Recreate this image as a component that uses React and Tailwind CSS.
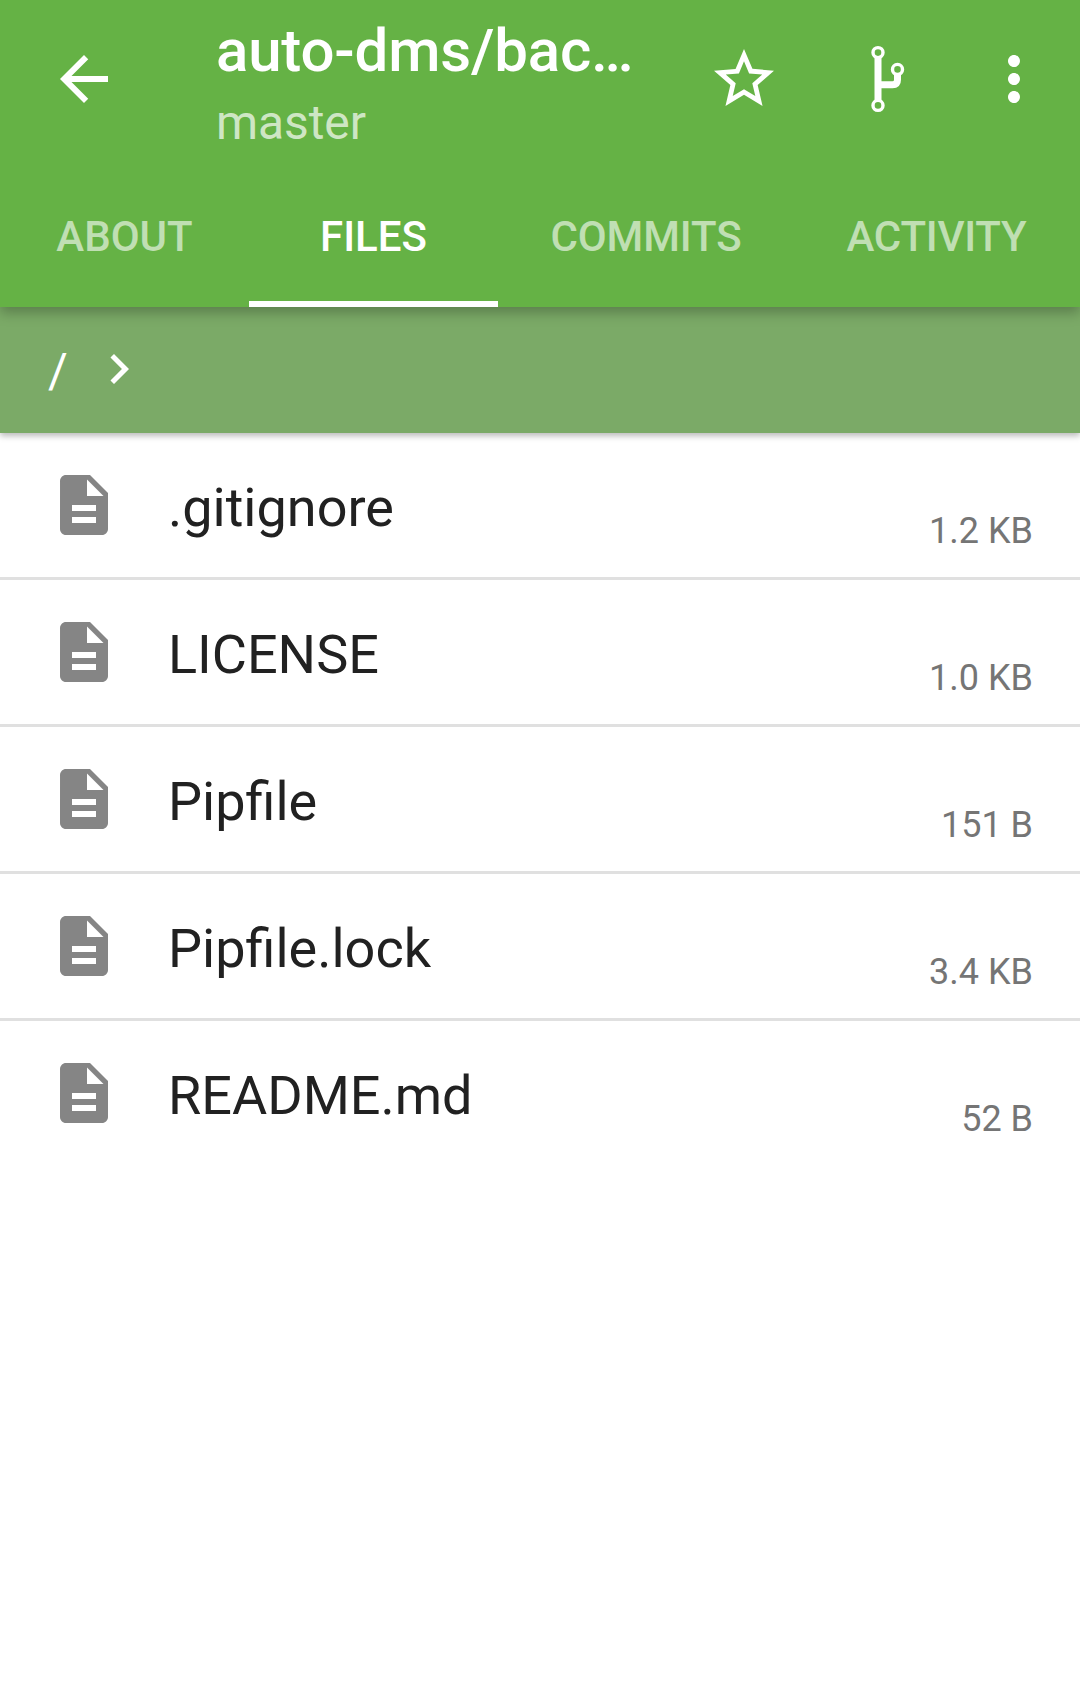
const files = [
  { name: '.gitignore', size: '1.2 KB' },
  { name: 'LICENSE', size: '1.0 KB' },
  { name: 'Pipfile', size: '151 B' },
  { name: 'Pipfile.lock', size: '3.4 KB' },
  { name: 'README.md', size: '52 B' },
];

const tabs = [
  { label: 'ABOUT', width: 'w-[249px]' },
  { label: 'FILES', width: 'w-[249px]', active: true },
  { label: 'COMMITS', width: 'w-[296px]', tracking: 'tracking-[-0.1px]' },
  { label: 'ACTIVITY', width: 'w-[285px]', tracking: 'tracking-[-0.25px]' },
];

function Icon({ d, className }) {
  return (
    <svg viewBox="0 0 24 24" fill="currentColor" className={className}>
      <path d={d} />
    </svg>
  );
}

function ForkIcon() {
  return (
    <svg viewBox="0 0 72 72" fill="none" stroke="white" className="size-[72px]">
      <path d="M26 14V58M26 41.8H40.5Q45.5 41.8 45.5 36.8V31" strokeWidth="7" />
      <g strokeWidth="3.4" fill="#65b245">
        <circle cx="26" cy="9.6" r="5" />
        <circle cx="45.5" cy="26.4" r="5" />
        <circle cx="26" cy="62.4" r="5" />
      </g>
    </svg>
  );
}

function Toolbar() {
  return (
    <div className="flex h-[163px] pl-12 pr-[30px]">
      <button className="mt-[43px] size-[72px] shrink-0">
        <Icon className="size-[72px]" d="M20 11H7.83l5.59-5.59L12 4l-8 8 8 8 1.41-1.41L7.83 13H20v-2z" />
      </button>
      <div className="ml-24 mt-[15px] w-[420px] shrink-0">
        <div className="whitespace-nowrap text-[60px] font-medium leading-[71px] tracking-[-0.18px]">auto-dms/bac…</div>
        <div className="mt-[9px] text-[48px] leading-[56px] tracking-[-0.1px] text-white/70">master</div>
      </div>
      <div className="ml-auto mt-[43px] flex h-[72px]">
        <Icon className="mr-[72px] size-[72px]" d="M22 9.24l-7.19-.62L12 2 9.19 8.63 2 9.24l5.46 4.73L5.82 21 12 17.27 18.18 21l-1.63-7.03L22 9.24zM12 15.4l-3.76 2.27 1-4.28-3.32-2.88 4.38-.38L12 6.1l1.71 4.04 4.38.38-3.32 2.88 1 4.28L12 15.4z" />
        <ForkIcon />
        <Icon className="ml-[54px] size-[72px]" d="M12 8c1.1 0 2-.9 2-2s-.9-2-2-2-2 .9-2 2 .9 2 2 2zm0 2c-1.1 0-2 .9-2 2s.9 2 2 2 2-.9 2-2-.9-2-2-2zm0 6c-1.1 0-2 .9-2 2s.9 2 2 2 2-.9 2-2-.9-2-2-2z" />
      </div>
    </div>
  );
}

function Tab({ label, width, active, tracking = '' }) {
  return (
    <button
      className={`${width} ${tracking} flex h-36 items-center justify-center border-b-[6px] pt-[9px] text-[42px] font-medium leading-[50px] ${
        active ? 'border-white text-white' : 'border-transparent text-white/60'
      }`}
    >
      {label}
    </button>
  );
}

export default function App() {
  return (
    <div className="min-h-[1699px] w-[1080px] overflow-hidden bg-white font-['Roboto',sans-serif]">
      <header className="relative z-20 h-[307px] bg-[#65b245] text-white shadow-[0_6px_12px_rgba(0,0,0,0.25)]">
        <Toolbar />
        <nav className="flex">
          {tabs.map((t) => (
            <Tab key={t.label} {...t} />
          ))}
        </nav>
      </header>
      <div className="relative z-10 flex h-[126px] items-center bg-[#7baa67] pl-12 text-white shadow-[0_3px_6px_rgba(0,0,0,0.27)]">
        <span className="w-[41px] pt-[2px] text-[48px] leading-[56px]">/</span>
        <Icon className="mb-[3px] size-[60px]" d="M10 6L8.59 7.41 13.17 12l-4.58 4.59L10 18l6-6z" />
      </div>
      <ul>
        {files.map((f) => (
          <li key={f.name} className="flex h-[147px] items-center border-b-[3px] border-[#e0e0e0] pl-12 pr-[47px] last:border-transparent">
            <Icon className="size-[72px] text-[#858585]" d="M14 2H6c-1.1 0-1.99.9-1.99 2L4 20c0 1.1.89 2 1.99 2H18c1.1 0 2-.9 2-2V8l-6-6zm2 16H8v-2h8v2zm0-4H8v-2h8v2zm-3-5V3.5L18.5 9H13z" />
            <span className="ml-12 grow pt-[5px] text-[54px] leading-[64px] text-[#212121]">{f.name}</span>
            <span className="pt-[51px] text-[36px] leading-[42px] text-[#757575]">{f.size}</span>
          </li>
        ))}
      </ul>
    </div>
  );
}
